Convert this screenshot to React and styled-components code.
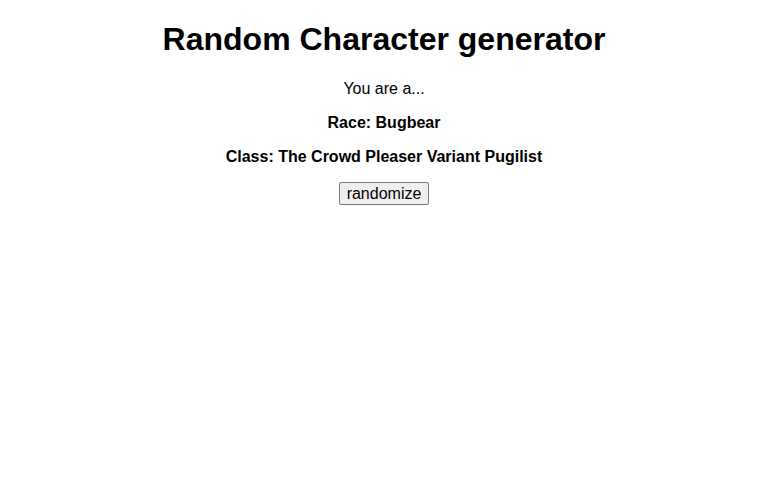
import React, { useState } from "react";
import styled, { createGlobalStyle } from "styled-components";

const races = ["Bugbear", "Dwarf", "Elf", "Halfling", "Tiefling", "Goblin"];
const classes = [
  "The Crowd Pleaser Variant Pugilist",
  "Battle Master Fighter",
  "Circle of the Moon Druid",
  "Oath of Vengeance Paladin",
];

const GlobalStyle = createGlobalStyle`
  body {
    margin: 0;
    font-family: "Liberation Sans", Arial, sans-serif;
    color: #000;
    background: #fff;
  }
`;

const Wrapper = styled.div`
  text-align: center;
`;

const Title = styled.h1`
  font-size: 2em;
  margin: 0.67em 0;
`;

const Line = styled.p`
  margin: 1em 0;
  font-weight: ${(props) => (props.bold ? "bold" : "normal")};
`;

const Button = styled.button`
  font-family: "Liberation Sans", Arial, sans-serif;
  font-size: 16px;
  color: #000;
  padding: 2px 7px 1px;
  background: #efefef;
  border: 1px solid #767676;
  border-radius: 2px;
  cursor: pointer;
`;

const App = () => {
  const [race, setRace] = useState("Bugbear");
  const [klass, setKlass] = useState("The Crowd Pleaser Variant Pugilist");

  const randomize = () => {
    setRace(races[Math.floor(Math.random() * races.length)]);
    setKlass(classes[Math.floor(Math.random() * classes.length)]);
  };

  return (
    <>
      <GlobalStyle />
      <Wrapper>
        <Title>Random Character generator</Title>
        <Line>You are a...</Line>
        <Line bold>Race: {race}</Line>
        <Line bold>Class: {klass}</Line>
        <Button onClick={randomize}>randomize</Button>
      </Wrapper>
    </>
  );
};

export default App;
